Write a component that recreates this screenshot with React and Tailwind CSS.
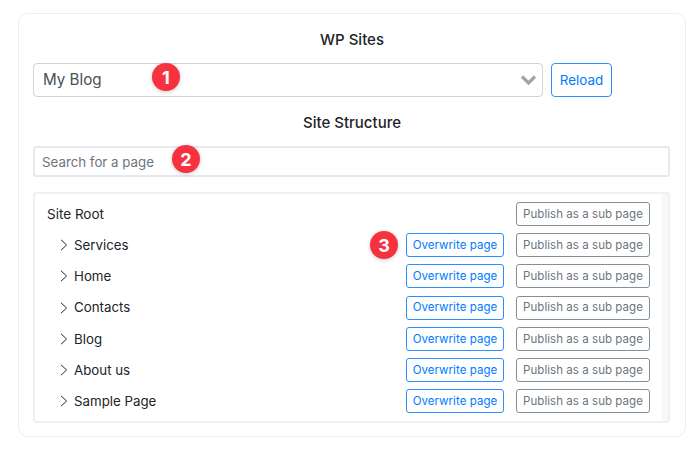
const rows = ["Services", "Home", "Contacts", "Blog", "About us", "Sample Page"];

function Badge({ n, className }) {
  return (
    <span className={`absolute flex h-[28px] w-[28px] items-center justify-center rounded-full bg-[#f8313f] text-[18px] font-bold text-white shadow-[0_1px_4px_rgba(0,0,0,0.2)] ${className}`}>
      {n}
    </span>
  );
}

function Chevron() {
  return (
    <svg width="8" height="12" viewBox="0 0 8 12" fill="none" stroke="#212529" strokeWidth="1" className="shrink-0">
      <path d="M1 .8 6.6 6 1 11.2" />
    </svg>
  );
}

function Publish() {
  return (
    <button className="ml-[12px] h-[24px] w-[134px] shrink-0 rounded-[3px] border border-[#868e96] bg-white pt-[1px] text-[11.5px] tracking-[0.05px] text-[#6c757d]">
      Publish as a sub page
    </button>
  );
}

function Overwrite() {
  return (
    <button className="h-[24px] w-[98px] shrink-0 rounded-[3px] border border-[#2b8fff] bg-white pt-[1px] text-[11.5px] tracking-[0.05px] text-[#007bff]">
      Overwrite page
    </button>
  );
}

export default function App() {
  return (
    <div className="h-[451px] w-[700px] overflow-hidden bg-white pl-[18px] pt-[13px] font-['Inter','Liberation_Sans',sans-serif] text-[#212529]">
      <div className="relative h-[424px] w-[668px] rounded-[10px] border border-[#eceef1] px-[14px] pt-[15px]">
        <h2 className="text-center text-[15px] leading-[22px] font-medium">WP Sites</h2>

        <div className="mt-[12px] flex gap-[8px]">
          <div className="flex h-[34px] w-[510px] items-center justify-between rounded-[4px] border border-[#ced4da] pl-[9px] pr-[4px] text-[15.2px] text-[#495057]">
            <span className="pt-[1px]">My Blog</span>
            <svg width="17" height="12" viewBox="0 0 17 12" fill="none" stroke="#a3a3a3" strokeWidth="3.2" className="mr-[1px]">
              <path d="M2 2.5 8.5 9 15 2.5" />
            </svg>
          </div>
          <button className="h-[34px] w-[61px] rounded-[4px] border border-[#2b8fff] bg-white text-[13.4px] text-[#007bff]">
            Reload
          </button>
        </div>

        <h2 className="mt-[15px] text-center text-[15px] leading-[22px] font-medium">Site Structure</h2>

        <input
          readOnly
          placeholder="Search for a page"
          className="mt-[12px] block h-[31px] w-[637px] rounded-[3px] border-2 border-[#e6e9ee] px-[7px] text-[13.3px] placeholder:text-[#6c757d]"
        />

        <div className="mt-[15px] flex h-[231px] w-[637px] rounded-[3px] border-2 border-[#eff0f2]">
          <div className="flex min-w-0 grow flex-col gap-[7.2px] pl-[12px] pr-[12px] pt-[8px]">
            <div className="flex h-[24px] items-center justify-between text-[13.5px]">
              <span>Site Root</span>
              <Publish />
            </div>
            {rows.map((r) => (
              <div key={r} className="flex h-[24px] items-center text-[13.3px]">
                <span className="ml-[13px] mr-[7px] flex w-[7px] justify-center"><Chevron /></span>
                <span className="grow pt-[1.6px]">{r}</span>
                <Overwrite />
                <Publish />
              </div>
            ))}
          </div>
          <div className="w-[6px] shrink-0 bg-[#f8f8f8]" />
        </div>

        <Badge n="1" className="left-[133px] top-[49px]" />
        <Badge n="2" className="left-[153px] top-[131px]" />
        <Badge n="3" className="left-[351px] top-[217px]" />
      </div>
    </div>
  );
}
